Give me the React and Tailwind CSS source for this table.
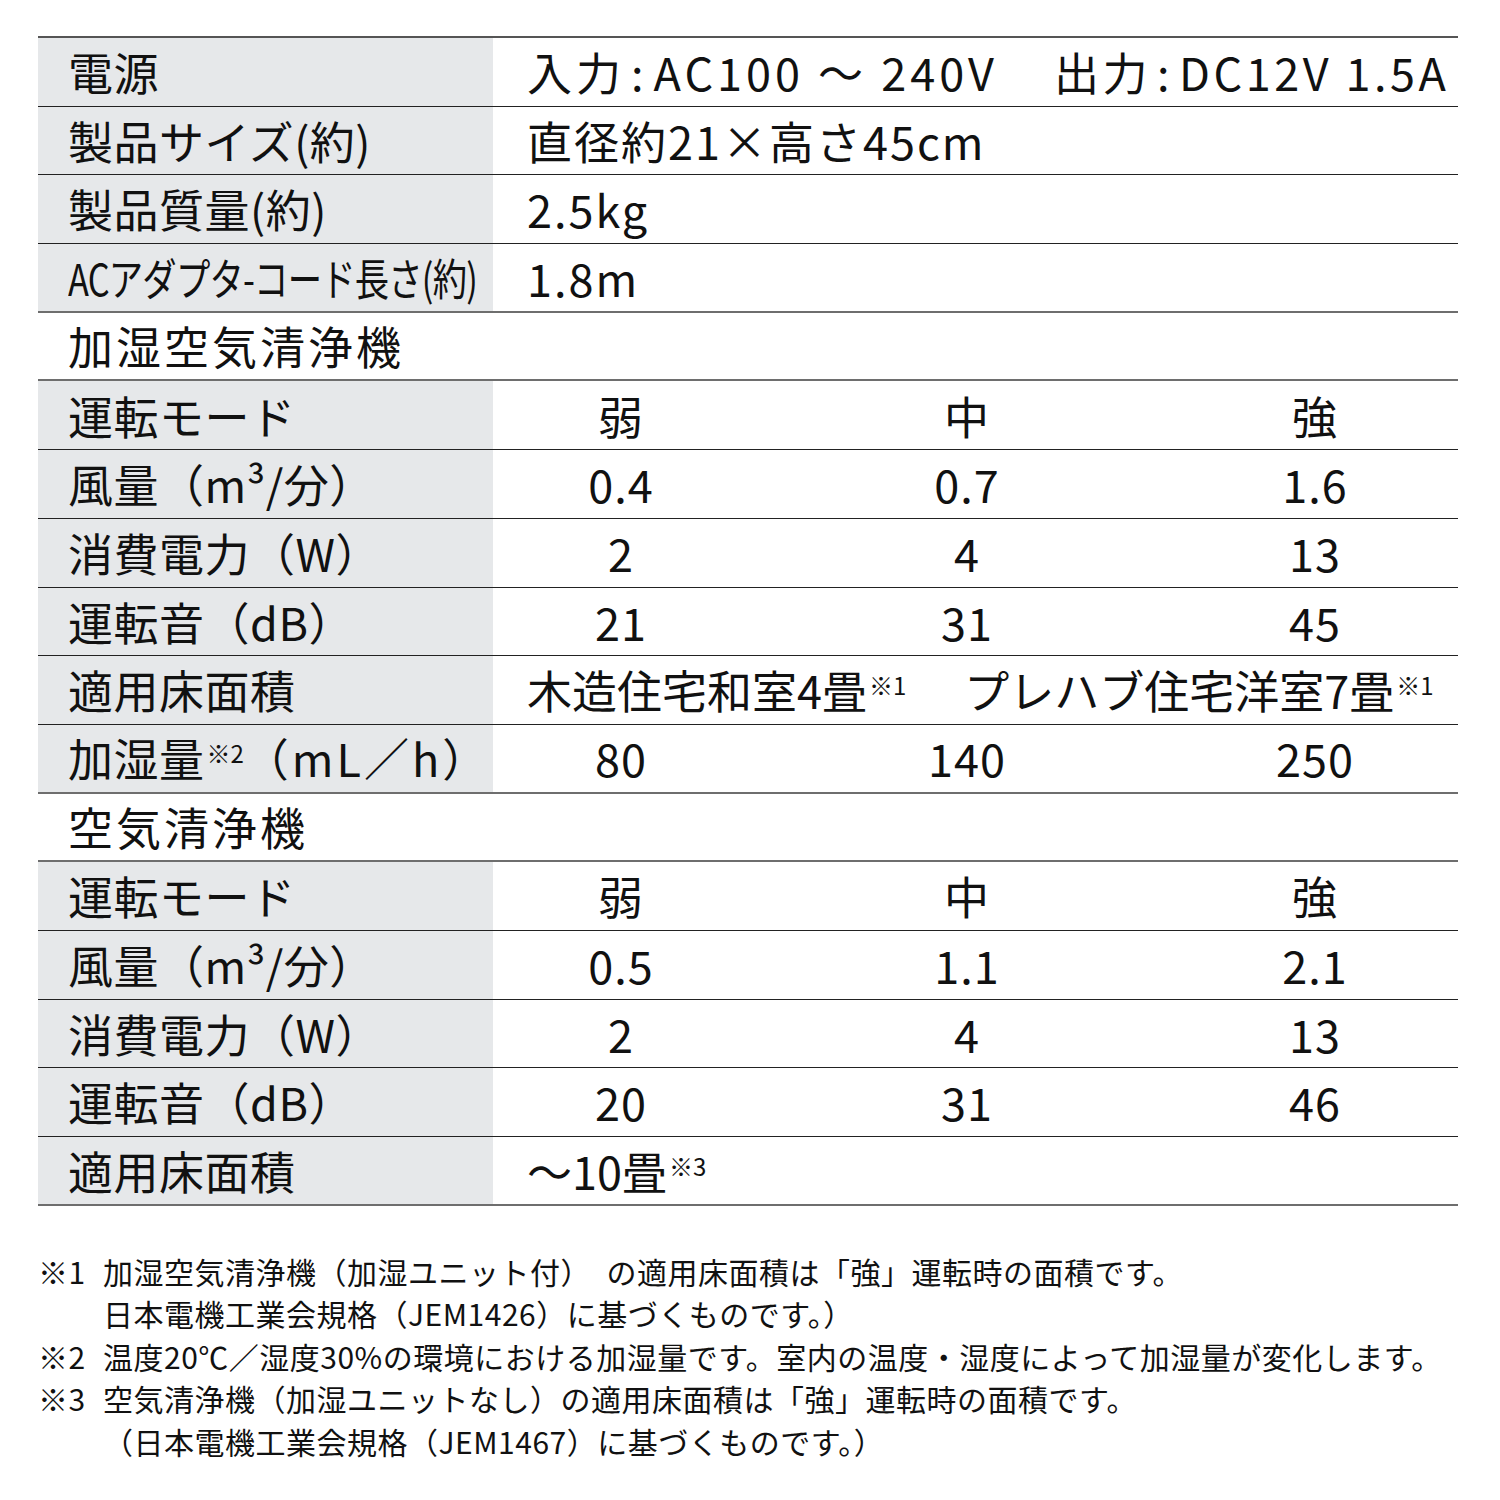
const font = "font-['Noto_Sans_CJK_JP','Noto_Sans_CJK_SC',sans-serif]";

const Label = ({ children }) => (
  <div className="w-[455px] shrink-0 bg-[#e6e8ea] h-full flex items-center pl-[30px] text-[45px] tracking-[0.5px] whitespace-nowrap">
    {children}
  </div>
);

const Row = ({ label, children, line = "thin" }) => (
  <div
    className={
      "flex items-stretch h-[68.7px] " +
      (line === "thick" ? "border-b-2 border-[#6e6e6e]" : "border-b border-[#222]")
    }
  >
    <Label>{label}</Label>
    <div className="flex-1 flex items-center text-[45px]">{children}</div>
  </div>
);

const Plain = ({ children }) => (
  <div className="pl-[34px] whitespace-nowrap tracking-[2px]">{children}</div>
);

const Three = ({ a, b, c }) => (
  <div className="grid grid-cols-[256px_436px_260px] w-full text-center tracking-[1px]">
    <div>{a}</div>
    <div>{b}</div>
    <div>{c}</div>
  </div>
);

const Heading = ({ children }) => (
  <div className="h-[68.7px] flex items-center pl-[30px] text-[45px] border-b-2 border-[#6e6e6e] tracking-[3px]">
    {children}
  </div>
);

const Sup = ({ children }) => (
  <span className="text-[24px] relative -top-[14px] ml-[2px] tracking-normal">{children}</span>
);

const Note = ({ mark, lines }) => (
  <div className="flex">
    <div className="w-[65px] shrink-0 whitespace-nowrap">{mark}</div>
    <div>
      {lines.map((l, i) => (
        <div key={i} className="whitespace-nowrap">{l}</div>
      ))}
    </div>
  </div>
);

export default function App() {
  return (
    <div className={"w-[1500px] h-[1500px] bg-white text-[#111] " + font}>
      <div className="pt-[36px] px-[38px] w-[1496px]">
        <div className="border-t-2 border-[#555]">
          <Row label="電源">
            <div className="pl-[34px] flex whitespace-nowrap">
              <span className="tracking-[4px]">
                入力<span className="mx-[6px]">:</span>AC100 ～ 240V
              </span>
              <span className="ml-[56px] tracking-[3.5px]">
                出力<span className="mx-[6px]">:</span>DC12V 1.5A
              </span>
            </div>
          </Row>
          <Row label="製品サイズ(約)">
            <Plain>直径約21×高さ45cm</Plain>
          </Row>
          <Row label="製品質量(約)">
            <Plain>2.5kg</Plain>
          </Row>
          <Row
            label={
              <span className="inline-block text-[44px] tracking-[-1px] scale-x-[0.78] origin-left">
                ACアダプタ-コード長さ(約)
              </span>
            }
            line="thick"
          >
            <Plain>1.8m</Plain>
          </Row>

          <Heading>加湿空気清浄機</Heading>
          <Row label="運転モード">
            <Three a="弱" b="中" c="強" />
          </Row>
          <Row label="風量（m³/分）">
            <Three a="0.4" b="0.7" c="1.6" />
          </Row>
          <Row label="消費電力（W）">
            <Three a="2" b="4" c="13" />
          </Row>
          <Row label="運転音（dB）">
            <Three a="21" b="31" c="45" />
          </Row>
          <Row label="適用床面積">
            <div className="pl-[34px] flex whitespace-nowrap">
              <span>
                木造住宅和室4畳<Sup>※1</Sup>
              </span>
              <span className="ml-[58px]">
                プレハブ住宅洋室7畳<Sup>※1</Sup>
              </span>
            </div>
          </Row>
          <Row
            label={
              <span className="whitespace-nowrap">
                加湿量<Sup>※2</Sup>
                <span className="tracking-[3px]">（mL／h）</span>
              </span>
            }
            line="thick"
          >
            <Three a="80" b="140" c="250" />
          </Row>

          <Heading>空気清浄機</Heading>
          <Row label="運転モード">
            <Three a="弱" b="中" c="強" />
          </Row>
          <Row label="風量（m³/分）">
            <Three a="0.5" b="1.1" c="2.1" />
          </Row>
          <Row label="消費電力（W）">
            <Three a="2" b="4" c="13" />
          </Row>
          <Row label="運転音（dB）">
            <Three a="20" b="31" c="46" />
          </Row>
          <Row label="適用床面積" line="thick">
            <div className="pl-[34px] whitespace-nowrap">
              ～10畳<Sup>※3</Sup>
            </div>
          </Row>
        </div>
      </div>

      <div className="pl-[38px] mt-[44px] text-[30px] leading-[42.5px] tracking-[0.5px]">
        <Note
          mark="※1"
          lines={[
            "加湿空気清浄機（加湿ユニット付）　の適用床面積は「強」運転時の面積です。",
            "日本電機工業会規格（JEM1426）に基づくものです。）",
          ]}
        />
        <Note
          mark="※2"
          lines={["温度20℃／湿度30%の環境における加湿量です。室内の温度・湿度によって加湿量が変化します。"]}
        />
        <Note
          mark="※3"
          lines={[
            "空気清浄機（加湿ユニットなし）の適用床面積は「強」運転時の面積です。",
            "（日本電機工業会規格（JEM1467）に基づくものです。）",
          ]}
        />
      </div>
    </div>
  );
}
